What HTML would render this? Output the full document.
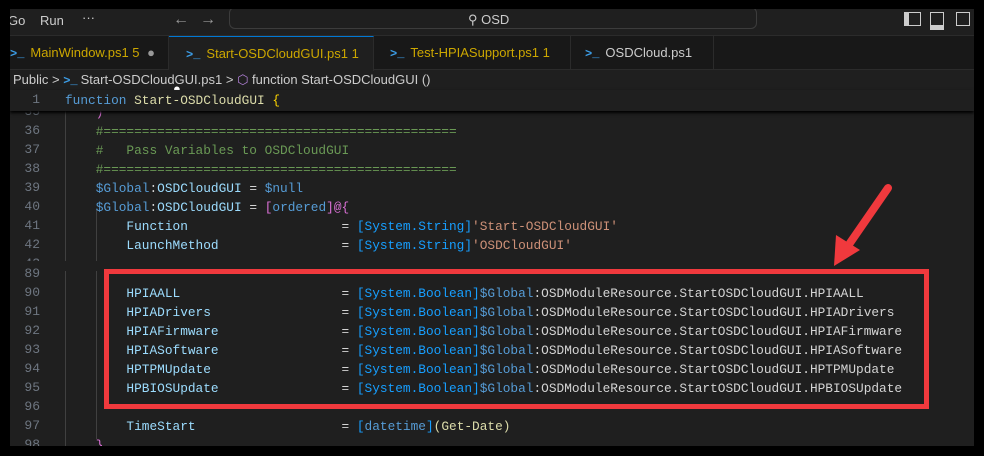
<!DOCTYPE html><html><head><style>
body{margin:0;width:984px;height:456px;background:#000;overflow:hidden;position:relative;font-family:"Liberation Sans",sans-serif}
.win{position:absolute;left:10px;top:9px;width:964px;height:437px;background:#1f1f1f;overflow:hidden}
.title{position:absolute;left:0;top:0;width:964px;height:26px;background:#1f1f1f;border-bottom:1px solid #2b2b2b;color:#ccc;font-size:13px}
.tabs{position:absolute;left:0;top:27px;width:964px;height:33px;background:#181818;border-bottom:1px solid #2b2b2b}
.tab{position:absolute;top:0;height:33px;line-height:33px;font-size:13px;border-right:1px solid #2b2b2b;color:#cca700}
.ps{color:#3c9ee8;font-weight:bold;margin-right:6px;font-family:"Liberation Mono",monospace;font-size:12px}
.bc{position:absolute;left:0;top:61px;height:20px;line-height:20px;font-size:13px;color:#ccc;width:964px}
.ln{position:absolute;width:30px;text-align:right;color:#6e7681;font-family:"Liberation Mono",monospace;font-size:13px;left:0}
.l{position:absolute;left:55px;color:#9cdcfe;font-family:"Liberation Mono",monospace;font-size:12.8px;white-space:pre;line-height:19px}
.k{color:#569cd6}.c{color:#6a9955}.s{color:#ce9178}.b{color:#179fff}.d{color:#d4d4d4}.y{color:#ffd700}.p{color:#da70d6}.f{color:#dcdcaa}
</style></head><body>
<div class="win">
<div class="title"><span style="position:absolute;left:-2px;top:4px">Go</span><span style="position:absolute;left:30px;top:4px">Run</span><span style="position:absolute;left:72px;top:1px">···</span>
<span style="position:absolute;left:163px;top:2px;font-size:16px;color:#999">←</span><span style="position:absolute;left:190px;top:2px;font-size:16px;color:#999">→</span>
<div style="position:absolute;left:219px;top:-2px;width:526px;height:20px;border:1px solid #3c3c3c;border-radius:6px;background:#1f1f1f"></div>
<span style="position:absolute;left:458px;top:3px;color:#ccc">⚲ OSD</span>
<div style="position:absolute;left:894px;top:3px;width:11px;height:12px;border:1.5px solid #ccc;border-left-width:5px"></div>
<div style="position:absolute;left:920px;top:3px;width:12px;height:12px;border:1.5px solid #ccc;border-bottom-width:5px"></div>
<div style="position:absolute;left:946px;top:3px;width:12px;height:12px;border:1.5px solid #ccc"></div>
</div>
<div class="tabs">
<div class="tab" style="left:0;width:158px"><span class="ps">&gt;_</span>MainWindow.ps1 5 <span style="color:#999;margin-left:4px">●</span></div>
<div class="tab" style="left:159px;width:204px;background:#1f1f1f;border-top:1px solid #0078d4;height:34px"><span class="ps" style="margin-left:17px">&gt;_</span>Start-OSDCloudGUI.ps1 1 <span style="color:#fff;margin-left:4px">●</span></div>
<div class="tab" style="left:364px;width:196px"><span class="ps" style="margin-left:16px">&gt;_</span>Test-HPIASupport.ps1 1</div>
<div class="tab" style="left:561px;width:142px;color:#ccc"><span class="ps" style="margin-left:14px">&gt;_</span>OSDCloud.ps1</div>
</div>
<div class="bc"><span style="margin-left:3px">Public &gt; <span class="ps" style="margin-right:3px">&gt;_</span>Start-OSDCloudGUI.ps1 &gt; <span style="color:#b180d7">⬡</span> function Start-OSDCloudGUI ()</span></div>
<div style="position:absolute;left:0;top:81px;width:964px;height:21px;box-shadow:0 2px 3px #000;background:#1f1f1f;z-index:2">
<div class="ln" style="top:2px">1</div><div class="l" style="top:1px;left:55px"><span class="k">function</span> <span class="f">Start-OSDCloudGUI</span> <span class="y">{</span></div></div>
<div style="position:absolute;left:55px;top:102px;width:1px;height:340px;background:#404040"></div>
<div style="position:absolute;left:86px;top:200px;width:1px;height:230px;background:#404040"></div>
<div style="position:absolute;left:0;top:0">
<div class="ln" style="top:95px">35</div><div class="l" style="top:94px">    <span class="p">)</span></div>
<div class="ln" style="top:114px">36</div><div class="l c" style="top:113px">    #==============================================</div>
<div class="ln" style="top:133px">37</div><div class="l c" style="top:132px">    #   Pass Variables to OSDCloudGUI</div>
<div class="ln" style="top:152px">38</div><div class="l c" style="top:151px">    #==============================================</div>
<div class="ln" style="top:171px">39</div><div class="l" style="top:170px">    <span class="k">$Global</span><span class="d">:</span>OSDCloudGUI <span class="d">=</span> <span class="k">$null</span></div>
<div class="ln" style="top:190px">40</div><div class="l" style="top:189px">    <span class="k">$Global</span><span class="d">:</span>OSDCloudGUI <span class="d">=</span> <span class="p">[</span><span class="k">ordered</span><span class="p">]@{</span></div>
<div class="l" style="top:208px">        Function                    <span class="d">=</span> <span class="b">[System.String]</span><span class="s">'Start-OSDCloudGUI'</span></div><div class="ln" style="top:209px">41</div>
<div class="l" style="top:227px">        LaunchMethod                <span class="d">=</span> <span class="b">[System.String]</span><span class="s">'OSDCloudGUI'</span></div><div class="ln" style="top:228px">42</div>
<div class="ln" style="top:247px">43</div>
<div style="position:absolute;left:0;top:252px;width:964px;height:10px;background:#1f1f1f"></div>
<div class="ln" style="top:257px">89</div>
<div class="ln" style="top:276px">90</div><div class="l" style="top:275px">        HPIAALL                     <span class="d">=</span> <span class="b">[System.Boolean]</span><span class="k">$Global</span><span class="d">:OSDModuleResource.StartOSDCloudGUI.HPIAALL</span></div>
<div class="ln" style="top:295px">91</div><div class="l" style="top:294px">        HPIADrivers                 <span class="d">=</span> <span class="b">[System.Boolean]</span><span class="k">$Global</span><span class="d">:OSDModuleResource.StartOSDCloudGUI.HPIADrivers</span></div>
<div class="ln" style="top:314px">92</div><div class="l" style="top:313px">        HPIAFirmware                <span class="d">=</span> <span class="b">[System.Boolean]</span><span class="k">$Global</span><span class="d">:OSDModuleResource.StartOSDCloudGUI.HPIAFirmware</span></div>
<div class="ln" style="top:333px">93</div><div class="l" style="top:332px">        HPIASoftware                <span class="d">=</span> <span class="b">[System.Boolean]</span><span class="k">$Global</span><span class="d">:OSDModuleResource.StartOSDCloudGUI.HPIASoftware</span></div>
<div class="ln" style="top:352px">94</div><div class="l" style="top:351px">        HPTPMUpdate                 <span class="d">=</span> <span class="b">[System.Boolean]</span><span class="k">$Global</span><span class="d">:OSDModuleResource.StartOSDCloudGUI.HPTPMUpdate</span></div>
<div class="ln" style="top:371px">95</div><div class="l" style="top:370px">        HPBIOSUpdate                <span class="d">=</span> <span class="b">[System.Boolean]</span><span class="k">$Global</span><span class="d">:OSDModuleResource.StartOSDCloudGUI.HPBIOSUpdate</span></div>
<div class="ln" style="top:390px">96</div>
<div class="ln" style="top:409px">97</div><div class="l" style="top:408px">        TimeStart                   <span class="d">=</span> <span class="b">[</span><span class="k">datetime</span><span class="b">]</span><span class="f">(Get-Date)</span></div>
<div class="ln" style="top:428px">98</div><div class="l" style="top:427px">    <span class="p">}</span></div>
</div>
<div style="position:absolute;left:94px;top:260px;width:815px;height:130px;border:5px solid #f0393d;z-index:3"></div>
</div>
<svg style="position:absolute;left:0;top:0" width="984" height="456"><line x1="888" y1="188" x2="850" y2="243" stroke="#f0393d" stroke-width="8" stroke-linecap="round"/><polygon points="834,266 836,235 860,250" fill="#f0393d"/></svg>
</body></html>
